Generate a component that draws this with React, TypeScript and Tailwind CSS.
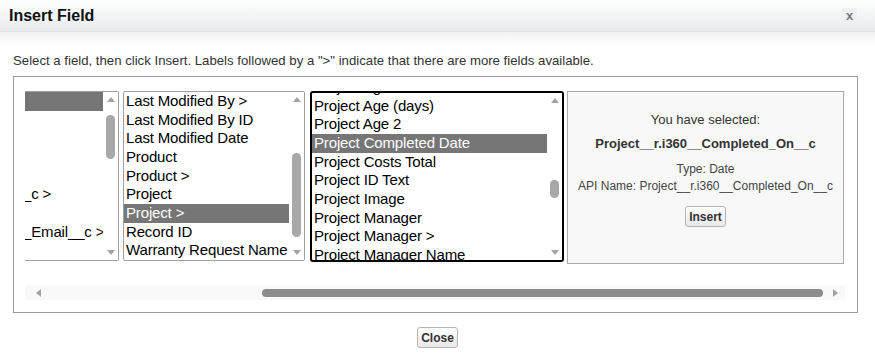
import React from "react";

const list1 = ["", "", "", "", "", "_c >", "", "_Email__c >", ""];

const list2 = [
  "Last Modified By >",
  "Last Modified By ID",
  "Last Modified Date",
  "Product",
  "Product >",
  "Project",
  "Project >",
  "Record ID",
  "Warranty Request Name",
];

const list3 = [
  "Project Age",
  "Project Age (days)",
  "Project Age 2",
  "Project Completed Date",
  "Project Costs Total",
  "Project ID Text",
  "Project Image",
  "Project Manager",
  "Project Manager >",
  "Project Manager Name",
];

const Arrow = ({ dir }: { dir: "up" | "down" | "left" | "right" }) => {
  const pts = {
    up: "0,5 4,0 8,5",
    down: "0,0 8,0 4,5",
    left: "5,0 5,8 0,4",
    right: "0,0 0,8 5,4",
  }[dir];
  const vertical = dir === "up" || dir === "down";
  return (
    <svg width={vertical ? 8 : 5} height={vertical ? 5 : 8}>
      <polygon points={pts} fill="#a3a3a3" />
    </svg>
  );
};

// fake chrome listbox scrollbar, thumb offset measured from the top of the track
const VScroll = ({ top, height }: { top: number; height: number }) => (
  <div className="w-[15px] h-full flex flex-col items-center bg-white">
    <div className="h-[15px] flex items-center justify-center shrink-0">
      <Arrow dir="up" />
    </div>
    <div className="flex-1 w-full flex justify-center">
      <div
        className="w-[9px] rounded-full bg-[#a8a8a8]"
        style={{ marginTop: top, height }}
      />
    </div>
    <div className="h-[15px] flex items-center justify-center shrink-0">
      <Arrow dir="down" />
    </div>
  </div>
);

const Row = ({ text, selected }: { text: string; selected?: boolean }) => (
  <div
    className={`h-[18.67px] leading-[18.67px] pl-[2px] whitespace-nowrap ${
      selected ? "bg-[#767676] text-white" : "text-black"
    }`}
  >
    {text}
  </div>
);

export default function App() {
  return (
    <div className="w-[875px] h-[364px] overflow-hidden bg-white font-['Liberation_Sans',Arial,sans-serif]">
      <div className="h-[32px] flex items-center justify-between pl-[9px] pr-[18px] bg-[linear-gradient(#ffffff,#e7ebec)] border-b border-[#dde1e2]">
        <div className="text-[16px] font-bold text-[#111]">Insert Field</div>
        <div className="w-[15px] h-[15px] flex items-center justify-center bg-[#eef0f1] text-[13px] font-bold leading-none text-[#777]">
          x
        </div>
      </div>

      <div className="bg-[linear-gradient(#f1f2f2,#ffffff_14px)] pt-[21px]">
        <div className="pl-[13px] text-[13.2px] leading-[15px] text-[#333]">
          Select a field, then click Insert. Labels followed by a "&gt;" indicate that there are more fields available.
        </div>

        <div className="ml-[13px] mt-[8px] w-[845px] h-[237px] border border-[#999] pl-[11px] pt-[14px]">
          <div className="w-[820px] h-[173px] overflow-hidden flex items-start text-[15px] tracking-[-0.15px]">
            <div className="w-[94px] h-[170px] shrink-0 flex border-y border-r border-[#a0a0a0] rounded-r-[2px] overflow-hidden">
              <div className="flex-1 overflow-hidden">
                {list1.map((t, i) => (
                  <div
                    key={i}
                    className={`h-[18.67px] leading-[18.67px] whitespace-nowrap -ml-[2px] ${
                      i === 0 ? "bg-[#767676]" : ""
                    }`}
                  >
                    {t}
                  </div>
                ))}
              </div>
              <VScroll top={8} height={44} />
            </div>

            <div className="ml-[4px] w-[182px] h-[170px] shrink-0 flex border border-[#a0a0a0] rounded-[2px] overflow-hidden">
              <div className="flex-1 overflow-hidden">
                {list2.map((t) => (
                  <Row key={t} text={t} selected={t === "Project >"} />
                ))}
              </div>
              <VScroll top={46} height={84} />
            </div>

            <div className="ml-[5px] w-[254px] h-[171px] shrink-0 flex border-2 border-black rounded-[3px] overflow-hidden">
              <div className="flex-1 overflow-hidden">
                <div className="-mt-[15px]">
                  {list3.map((t) => (
                    <Row key={t} text={t} selected={t === "Project Completed Date"} />
                  ))}
                </div>
              </div>
              <VScroll top={72} height={18} />
            </div>

            <div className="ml-[3px] w-[277px] h-[173px] shrink-0 border border-[#aaa] bg-[#f8f8f8] flex flex-col items-center pt-[20px] text-[#333] tracking-normal">
              <div className="text-[13px] leading-[15px]">You have selected:</div>
              <div className="mt-[9px] text-[13px] leading-[15px] font-bold">
                Project__r.i360__Completed_On__c
              </div>
              <div className="mt-[11px] text-[12px] leading-[14px] text-[#444]">Type: Date</div>
              <div className="mt-[3px] text-[12px] leading-[14px] text-[#444]">
                API Name: Project__r.i360__Completed_On__c
              </div>
              <button className="mt-[13px] h-[21px] px-[3px] border border-[#b5b5b5] rounded-[3px] bg-[linear-gradient(#ffffff,#e8e8e8)] text-[12px] font-bold text-[#333]">
                Insert
              </button>
            </div>
          </div>

          <div className="mt-[21px] w-[820px] h-[15px] bg-[#f9f9f9] flex items-center">
            <div className="w-[16px] flex justify-end">
              <Arrow dir="left" />
            </div>
            <div className="ml-[221px] w-[561px] h-[8px] rounded-full bg-[#8c8c8c]" />
            <div className="ml-[10px]">
              <Arrow dir="right" />
            </div>
          </div>
        </div>

        <div className="flex justify-center mt-[14px]">
          <button className="h-[21px] px-[3px] border border-[#b5b5b5] rounded-[3px] bg-[linear-gradient(#ffffff,#e8e8e8)] text-[12px] font-bold text-[#333]">
            Close
          </button>
        </div>
      </div>
    </div>
  );
}
